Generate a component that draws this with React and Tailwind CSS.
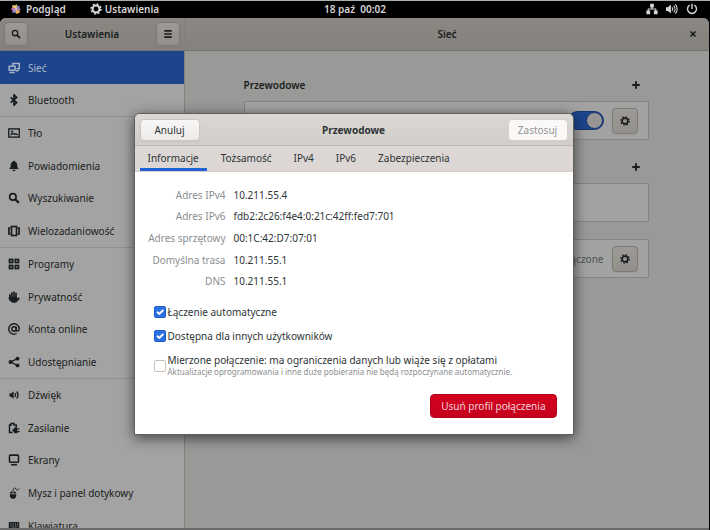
import React from "react";

const stroke = { fill: "none", stroke: "currentColor", strokeWidth: 2 };

const glyphs = {
  network: (
    <g {...stroke} strokeWidth="2">
      <path d="M6.500 5V2h8.500v7h-3.500" />
      <rect x="1.500" y="5.500" width="8" height="5.500" rx="0.500" />
      <path d="M2 14h7M10.500 11.500h3.500" />
    </g>
  ),
  bluetooth: <path {...stroke} strokeWidth="2.200" d="M3.500 4.500l8 7L8 15V1l3.500 3.500-8 7" />,
  background: (
    <g {...stroke} strokeWidth="1.800">
      <rect x="1" y="2.500" width="14" height="11" />
      <path d="M3.500 10.500l2.500-2 2 1 2-.5 3 1.500" />
      <circle cx="5.500" cy="6" r="0.600" />
    </g>
  ),
  bell: (
    <g fill="currentColor">
      <path d="M8 1c-.9 0-1.500.6-1.500 1.400C4.500 3 3.600 4.800 3.600 7c0 2.600-.8 4-2.100 5h13c-1.300-1-2.100-2.400-2.100-5 0-2.200-.9-4-2.900-4.600C9.500 1.600 8.900 1 8 1z" />
      <path d="M6 13h4a2 2 0 01-4 0z" />
    </g>
  ),
  search: (
    <g {...stroke} strokeWidth="2.200">
      <circle cx="6.500" cy="6.500" r="4.300" />
      <path d="M9.700 9.700l4.800 4.800" strokeWidth="3" />
    </g>
  ),
  multitask: (
    <g {...stroke} strokeWidth="2.200">
      <rect x="4.700" y="2" width="6.600" height="12" />
      <path d="M3.500 4H1.200v8h2.300M12.500 4h2.300v8h-2.300" />
    </g>
  ),
  apps: (
    <g {...stroke} strokeWidth="2.300">
      <rect x="2" y="2" width="4.200" height="4" />
      <rect x="9.800" y="2" width="4.200" height="4" />
      <rect x="2" y="10" width="4.200" height="4" />
      <rect x="9.800" y="10" width="4.200" height="4" />
    </g>
  ),
  hand: (
    <g fill="none" stroke="currentColor" strokeWidth="2.200" strokeLinecap="round">
      <path d="M2.500 5v6M5.200 2.500V10M8 1.500V10M10.700 3V10" />
      <path fill="currentColor" strokeWidth="1" d="M2 8h9.500v2.500l3-1.500.8 1-3.300 4-1.500 1H5.500L2 12z" />
    </g>
  ),
  at: (
    <g {...stroke} strokeWidth="1.900">
      <circle cx="8" cy="8" r="2.900" />
      <path d="M11 5v4.200c0 2.200 4 2 4-1.200a7 7 0 10-3.500 6" />
    </g>
  ),
  share: (
    <g fill="currentColor">
      <path d="M12.500 3.500L3.500 8l9 4.500" fill="none" stroke="currentColor" strokeWidth="1.800" />
      <circle cx="12.700" cy="3.500" r="2.600" />
      <circle cx="3.300" cy="8" r="2.600" />
      <circle cx="12.700" cy="12.500" r="2.600" />
    </g>
  ),
  sound: (
    <g fill="currentColor">
      <path d="M2 6h2L7.500 3v10L4 10.200H2z" />
      <path {...stroke} strokeWidth="1.900" d="M9.200 5.500c1 1.300 1 3.700 0 5M11.500 3.200c2.400 2.600 2.400 7 0 9.600" />
    </g>
  ),
  power: (
    <g fill="currentColor">
      <path {...stroke} d="M6 14H2V4h2V2h4v2h3v2.500" />
      <path d="M15.500 8.500h-3V7H10c-1.500 0-2.500 1.200-2.500 2.500H6v3h1.500c0 1.500 1 2.500 2.500 2.500h2.500v-1.500h3v-1.500h-3v-2h3z" />
    </g>
  ),
  display: (
    <g {...stroke} strokeWidth="2.100">
      <rect x="2" y="1.500" width="12" height="9.500" rx="1" />
      <path d="M4 14.300h8" />
    </g>
  ),
  mouse: (
    <g fill="currentColor">
      <path d="M2.500 8.500h3.700V5.600c-2.200.2-3.700 1.200-3.700 2.900zM7.300 8.500H11c0-1.700-1.500-2.700-3.700-2.900zM2.500 9.600H11V12c0 5-8.500 5-8.500 0z" />
      <path fill="none" stroke="currentColor" strokeWidth="1.200" d="M6.700 5.500C6.700 0 10.500 1 11 3c.5 1.500 2 1.500 4-1" />
    </g>
  ),
  keyboard: (
    <g>
      <rect x="1" y="2.500" width="14" height="11" rx="1" fill="currentColor" />
      <path
        stroke="#a3a3a3"
        strokeWidth="1.300"
        d="M3 5.200h1.500M6 5.200h1.500M9 5.200h1.500M12 5.200h1.500M3.500 8h1.500M6.500 8h1.500M9.500 8h1.500M12.300 8h1M4.500 11h7"
      />
    </g>
  ),
  menu: <path {...stroke} strokeWidth="2.600" d="M2 3h12M2 8h12M2 13h12" />,
  close: <path {...stroke} strokeWidth="3.200" d="M3 3l10 10M13 3L3 13" />,
  plus: <path {...stroke} strokeWidth="3" d="M8 2v12M2 8h12" />,
  gear: (
    <g {...stroke}>
      <circle cx="8" cy="8" r="4.600" strokeWidth="2.600" />
      <circle cx="8" cy="8" r="6.500" strokeWidth="2.200" strokeDasharray="2.550 2.550" />
    </g>
  ),
  wired: (
    <g fill="currentColor">
      <rect x="5.500" y="1" width="5" height="5" />
      <rect x="0.500" y="10" width="5" height="5" />
      <rect x="10.500" y="10" width="5" height="5" />
      <path {...stroke} strokeWidth="1.500" d="M8 5v3M3 11V8h10v3" />
    </g>
  ),
  volume: (
    <g fill="currentColor">
      <path d="M0 5.500h2.500L6.500 2v12L2.500 10.500H0z" />
      <path
        {...stroke}
        strokeWidth="1.500"
        d="M8 5.500c1.200 1.500 1.200 3.500 0 5M10.300 3.500c2.200 2.500 2.200 6.500 0 9M12.600 1.800c3 3.500 3 9 0 12.400"
      />
    </g>
  ),
  shutdown: <path {...stroke} strokeWidth="1.900" d="M8 1v7M5 2.700a6 6 0 106 0" />,
  centos: (
    <g>
      <path fill="#a5cc4a" d="M8 0l3 3v4H8z" />
      <path fill="#e8c64a" d="M2 2h6v5L2 7z" />
      <path fill="#c44a9a" d="M0 8l3-3 5 3-5 3z" />
      <path fill="#7b6bc0" d="M2 9h6v5H2z" />
      <path fill="#e8a33a" d="M8 9h6v5l-6 2z" />
      <path fill="#8c5aa8" d="M10 3h4v5l2 0-3 3-5-3z" />
      <path stroke="#f0e8e0" strokeWidth="0.800" d="M8 1v14M1 8h14M3 3l10 10M13 3L3 13" />
    </g>
  ),
};

function Icon({ name, className = "size-3" }) {
  return (
    <svg viewBox="0 0 16 16" className={`shrink-0 ${className}`} aria-hidden="true">
      {glyphs[name]}
    </svg>
  );
}

const groups = [
  [
    ["background", "Tło"],
    ["bell", "Powiadomienia"],
    ["search", "Wyszukiwanie"],
    ["multitask", "Wielozadaniowość"],
  ],
  [
    ["apps", "Programy"],
    ["hand", "Prywatność"],
    ["at", "Konta online"],
    ["share", "Udostępnianie"],
  ],
];

const devices = [
  ["sound", "Dźwięk"],
  ["power", "Zasilanie"],
  ["display", "Ekrany"],
  ["mouse", "Mysz i panel dotykowy"],
  ["keyboard", "Klawiatura"],
];

function NavItem({ icon, label, className = "" }) {
  return (
    <a href="#" className={`flex items-center gap-2 px-2 whitespace-nowrap ${className}`}>
      <Icon name={icon} />
      {label}
    </a>
  );
}

const dimButton =
  "flex items-center justify-center rounded border border-[#7d7974] bg-linear-to-b from-[#9c9996] to-[#93908c] shadow-xs";

function HeaderButton({ icon, label }) {
  return (
    <button aria-label={label} className={`size-6 ${dimButton}`}>
      <Icon name={icon} className="size-2.5" />
    </button>
  );
}

function Card({ children }) {
  return (
    <div className="flex h-[39px] items-center justify-end gap-2 border border-[#868482] bg-[#a2a2a2] px-2.5">
      {children}
    </div>
  );
}

function GearButton() {
  return (
    <button aria-label="Opcje" className={`size-[26px] ${dimButton}`}>
      <Icon name="gear" className="size-2.5" />
    </button>
  );
}

function AddButton() {
  return (
    <button aria-label="Dodaj" className="mr-px flex size-6 items-center justify-center">
      <Icon name="plus" className="size-2.5" />
    </button>
  );
}

const details = [
  ["Adres IPv4", "10.211.55.4"],
  ["Adres IPv6", "fdb2:2c26:f4e4:0:21c:42ff:fed7:701"],
  ["Adres sprzętowy", "00:1C:42:D7:07:01"],
  ["Domyślna trasa", "10.211.55.1"],
  ["DNS", "10.211.55.1"],
];

const tabs = ["Informacje", "Tożsamość", "IPv4", "IPv6", "Zabezpieczenia"];

function Check({ id, label, note, checked = false }) {
  return (
    <div className="flex items-center gap-0.5">
      <span className="relative flex size-3 shrink-0">
        <input
          id={id}
          type="checkbox"
          defaultChecked={checked}
          className="peer size-3 appearance-none rounded-xs border border-[#c9c0ba] bg-white checked:border-[#1b60cf] checked:bg-[#2a70e0]"
        />
        <svg
          viewBox="0 0 12 12"
          className="pointer-events-none absolute inset-0 hidden size-3 peer-checked:block"
          aria-hidden="true"
        >
          <path d="M3 5.800l2.300 2.200L9.300 4" fill="none" stroke="#fff" strokeWidth="1.900" />
        </svg>
      </span>
      <label htmlFor={id} className="flex flex-col whitespace-nowrap">
        <span className="leading-3">{label}</span>
        {note && <span className="text-[8px] leading-3 text-[#8b8e8f]">{note}</span>}
      </label>
    </div>
  );
}

function Dialog() {
  return (
    <section
      role="dialog"
      aria-label="Przewodowe"
      className="flex w-[440px] flex-col overflow-hidden rounded-t-md border border-[#62605d] bg-white text-[#2e3436] shadow-[0_3px_14px_rgba(0,0,0,0.6)]"
    >
      <header className="grid h-8 grid-cols-[60px_1fr_60px] items-center border-b border-[#bfb8b1] bg-linear-to-b from-[#dbd7d3] to-[#d2cec9] px-[5px]">
        <button className="h-[22px] rounded border border-[#cdc7c2] bg-linear-to-b from-[#f8f7f6] to-[#edebe9] shadow-xs">
          Anuluj
        </button>
        <h2 className="text-center font-bold">Przewodowe</h2>
        <button disabled className="h-[22px] rounded border border-[#d5d0cc] bg-[#faf9f8] text-[#929595]">
          Zastosuj
        </button>
      </header>
      <nav role="tablist" className="flex h-[26px] gap-1.5 border-b border-[#d5cfcb] bg-[#dcd7d4] px-[5px]">
        {tabs.map((t, i) => (
          <button
            key={t}
            role="tab"
            aria-selected={i === 0}
            className={`border-b-[3px] px-2 pt-0.5 ${i === 0 ? "border-[#1f62d4]" : "border-transparent"}`}
          >
            {t}
          </button>
        ))}
      </nav>
      <div className="flex flex-col pt-3 pr-4 pb-4 pl-[17px]">
        <dl className="grid h-[108px] auto-rows-fr grid-cols-[74px_1fr] items-center gap-x-2">
          {details.map(([k, v]) => (
            <React.Fragment key={k}>
              <dt className="justify-self-end whitespace-nowrap text-[#8b8e8f]">{k}</dt>
              <dd>{v}</dd>
            </React.Fragment>
          ))}
        </dl>
        <div className="flex flex-col gap-3 px-0.5 pt-3.5 pb-4">
          <Check id="auto" label="Łączenie automatyczne" checked />
          <Check id="shared" label="Dostępna dla innych użytkowników" checked />
          <Check
            id="metered"
            label="Mierzone połączenie: ma ograniczenia danych lub wiąże się z opłatami"
            note="Aktualizacje oprogramowania i inne duże pobierania nie będą rozpoczynane automatycznie."
          />
        </div>
        <button className="h-6 self-end rounded border border-[#b2001a] bg-linear-to-b from-[#d5001f] to-[#c4001c] px-2.5 text-[#f3d5d9]">
          Usuń profil połączenia
        </button>
      </div>
    </section>
  );
}

export default function App() {
  return (
    <div className="flex h-screen flex-col overflow-hidden border-t border-[#a9b0ae] bg-black font-['Noto_Sans',sans-serif] text-[10px] leading-4 text-[#191d20]">
      <div className="grid h-[17px] shrink-0 grid-cols-3 items-center px-[11px] pb-1 font-semibold text-[#d6d6d6]">
        <div className="flex items-center gap-6">
          <button className="flex items-center gap-[5px]">
            <Icon name="centos" className="size-2.5" />
            Podgląd
          </button>
          <button className="flex items-center gap-[3px]">
            <Icon name="gear" className="size-3" />
            Ustawienia
          </button>
        </div>
        <time className="text-center">18 paź&nbsp; 00:02</time>
        <div className="flex items-center justify-end gap-2 pr-px">
          <Icon name="wired" />
          <Icon name="volume" />
          <Icon name="shutdown" />
        </div>
      </div>

      <div className="relative mr-px flex min-h-0 flex-1 overflow-hidden rounded-t-md border-b-2 border-[#6a6a6a] bg-[#999998]">
        <aside className="flex w-[185px] shrink-0 flex-col overflow-hidden border-r border-[#82807d] bg-[#a3a3a3]">
          <header className="flex h-[33px] shrink-0 items-center justify-between border-b border-[#75716c] bg-linear-to-b from-[#8b8783] to-[#85817c] px-1">
            <HeaderButton icon="search" label="Szukaj" />
            <h1 className="font-semibold">Ustawienia</h1>
            <HeaderButton icon="menu" label="Menu" />
          </header>
          <nav className="flex flex-col">
            <NavItem icon="network" label="Sieć" className="h-[33px] bg-[#1d458c] text-[#a9b4c8]" />
            <NavItem icon="bluetooth" label="Bluetooth" className="h-[33px] border-b border-[#939290]" />
            {groups.map((items) => (
              <div key={items[0][0]} className="grid h-[131px] auto-rows-fr border-b border-[#939290]">
                {items.map(([icon, label]) => (
                  <NavItem key={label} icon={icon} label={label} />
                ))}
              </div>
            ))}
            <div className="grid h-[163px] auto-rows-fr">
              {devices.map(([icon, label]) => (
                <NavItem key={label} icon={icon} label={label} />
              ))}
            </div>
          </nav>
        </aside>

        <main className="flex min-w-0 flex-1 flex-col">
          <header className="grid h-[33px] shrink-0 grid-cols-[24px_1fr_24px] items-center border-b border-[#75716c] bg-linear-to-b from-[#8b8783] to-[#85817c] px-1">
            <h1 className="col-start-2 text-center font-semibold">Sieć</h1>
            <button aria-label="Zamknij" className="flex size-6 items-center justify-center">
              <Icon name="close" className="size-2" />
            </button>
          </header>
          <div className="flex justify-center pt-[22px] pr-0.5">
            <div className="flex w-[405px] flex-col">
              <div className="flex items-center justify-between pb-1">
                <h2 className="font-semibold">Przewodowe</h2>
                <AddButton />
              </div>
              <Card>
                <button
                  role="switch"
                  aria-checked="true"
                  aria-label="Połączenie przewodowe"
                  className="flex h-[19px] w-9 justify-end rounded-full border border-[#15366f] bg-[#1d458c]"
                >
                  <span className="size-[17px] rounded-full border border-[#15366f] bg-[#989694]" />
                </button>
                <GearButton />
              </Card>
              <div className="flex justify-end pt-[15px] pb-1">
                <AddButton />
              </div>
              <Card />
              <div className="pt-[17px]">
                <Card>
                  <span className="text-[#4f5253]">Wyłączone</span>
                  <GearButton />
                </Card>
              </div>
            </div>
          </div>
        </main>

        <div className="absolute inset-0 flex items-center justify-center pt-0.5 pr-0.5">
          <Dialog />
        </div>
      </div>
    </div>
  );
}
